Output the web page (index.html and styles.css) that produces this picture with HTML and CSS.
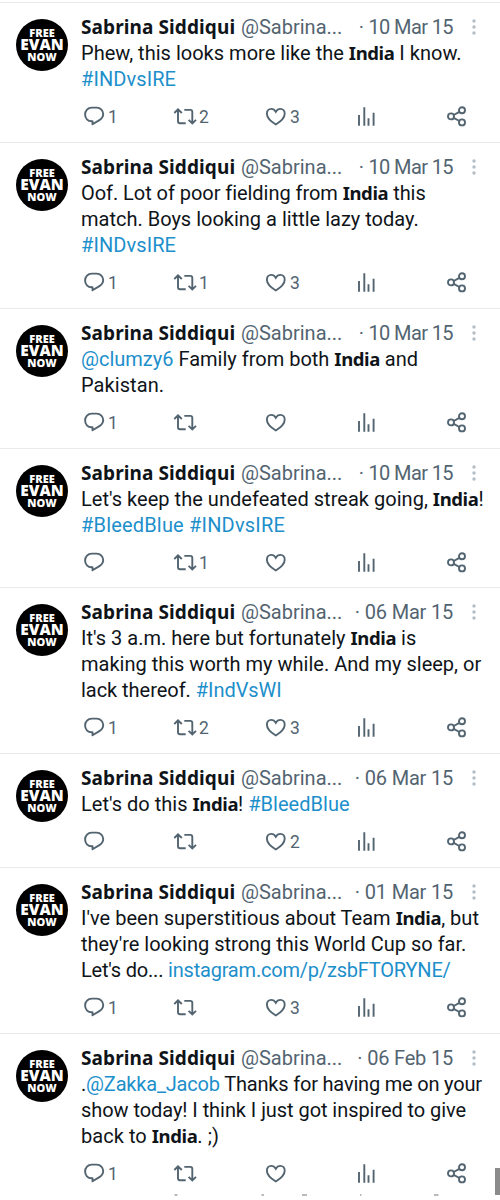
FILE: index.html
```html
<!DOCTYPE html>
<html lang="en">
<head>
<meta charset="utf-8">
<title>Posts</title>
<link rel="stylesheet" href="styles.css">
</head>
<body>
<main class="feed" id="feed"></main>
<svg class="peek" viewBox="0 0 500 2"><path d="M174.500 1H177.500M261.500 1H264M302 1H307M360 1H361.500M434 1H438.500"/></svg>
<div class="scrollbar"></div>
<script src="feed.js"></script>
</body>
</html>
```
FILE: styles.css
```css
* { box-sizing: border-box; }
body {
  margin: 0;
  height: 1200px;
  overflow: hidden;
  position: relative;
  background: #fff;
  color: #0f1419;
  font: 20px/26px Roboto, "Liberation Sans", sans-serif;
}
.feed { border-top: 1px solid #e8ebed; margin-top: 2px; }
.tweet {
  display: grid;
  grid-template-columns: 52px 1fr;
  column-gap: 13px;
  padding: 11px 0 12.86px 16px;
  border-bottom: 1px solid #e8ebed;
}
.tweet:last-child { border-bottom: 0; }
.avatar {
  width: 52px;
  height: 52px;
  margin-top: 5px;
  border-radius: 50%;
  background: #000;
  color: #fff;
  display: flex;
  flex-direction: column;
  align-items: center;
  padding-top: 8px;
  font-family: "Open Sans", "Noto Sans", sans-serif;
  font-weight: 800;
}
.avatar span { font-size: 11px; line-height: 11px; height: 11px; }
.avatar .mid { font-size: 15.5px; line-height: 13px; height: 13px; }
.head { display: flex; height: 26px; white-space: nowrap; }
.name { font: 700 19px/26px "Noto Sans", sans-serif; letter-spacing: 0.1px; width: 160px; }
.handle { width: 112px; color: #536471; }
.date { width: 100px; color: #536471; text-align: right; }
.dot { margin-right: 5px; }
.d10 { letter-spacing: -0.6px; }
.d06 { letter-spacing: -0.2px; }
.menu { width: 6px; height: 18px; margin: 4px 0 0 18px; fill: #b3bdc6; }
.line { height: 26px; white-space: nowrap; }
.line b { font: 700 18.5px/1 "Noto Sans", sans-serif; letter-spacing: -0.4px; }
.line a { color: #1d8fcb; text-decoration: none; }
.actions {
  display: grid;
  grid-template-columns: 91px 91px 91px 90px 40px;
  height: 24px;
  margin: 13px 0 0 1px;
  color: #536471;
}
.action { display: flex; gap: 2px; font-size: 17.5px; line-height: 25px; }
.action svg { width: 24px; height: 24px; fill: none; stroke: #536471; stroke-width: 1.9; }
.scrollbar { position: absolute; right: 0; top: 1168px; width: 5px; height: 27px; background: #8b8b8b; }
.peek { position: absolute; left: 0; top: 1194px; width: 500px; height: 2px; fill: none; stroke: #a0a5a9; stroke-width: 1.3; }
```
FILE: feed.js
```js
const icons = {
  reply: '<path d="M10.5 16.3H9.700C5.700 16.300 3.100 13.200 3.100 9.500S5.900 2.600 9.700 2.600H14.700C18.500 2.600 21.200 5.600 21.200 9.100C21.200 11.700 19.800 13.700 17.400 15.100L10.500 19.200Z" stroke-linejoin="round"/>',
  repost: '<path d="M1.300 8L5 4.400L8.800 8M5 4.800V16.300Q5 18.300 7 18.300H12.700M11.300 4.900H17.300Q19.300 4.900 19.300 6.900V18.200M15.600 14.900L19.300 18.500L23 14.900"/>',
  like: '<path d="M11.800 19.500C7 16.500 2.900 12.900 2.900 8.700C2.900 5.900 4.800 3.900 7.100 3.900C9.200 3.900 10.800 5 11.800 6.800C12.800 5 14.400 3.900 16.500 3.900C18.800 3.900 20.700 5.900 20.700 8.700C20.700 12.900 16.600 16.500 11.800 19.500Z"/>',
  views: '<path d="M4 10V20.700M9.300 2.300V20.700M13.500 13.300V20.700M18.600 7.700V20.700"/>',
  share: '<g><circle cx="6" cy="11.400" r="3"/><circle cx="17" cy="5.200" r="3"/><circle cx="17" cy="17.400" r="3"/><path d="M8.700 10L14.400 6.800M8.700 12.900L14.400 16"/></g>'
};

// Each line is [html, letter spacing in px].
const tweets = [
  { date: '10 Mar 15', counts: [1, 2, 3], lines: [["Phew, this looks more like the <b>India</b> I know.", 0.02], ["<a>#INDvsIRE</a>", 0.08]] },
  { date: '10 Mar 15', counts: [1, 1, 3], lines: [["Oof. Lot of poor fielding from <b>India</b> this", -0.05], ["match. Boys looking a little lazy today.", 0], ["<a>#INDvsIRE</a>", 0.08]] },
  { date: '10 Mar 15', counts: [1, '', ''], lines: [["<a>@clumzy6</a> Family from both <b>India</b> and", 0], ["Pakistan.", 0.08]] },
  { date: '10 Mar 15', counts: ['', 1, ''], lines: [["Let's keep the undefeated streak going, <b>India</b>!", 0.03], ["<a>#BleedBlue #INDvsIRE</a>", 0.18]] },
  { date: '06 Mar 15', counts: [1, 2, 3], lines: [["It's 3 a.m. here but fortunately <b>India</b> is", 0.01], ["making this worth my while. And my sleep, or", 0], ["lack thereof. <a>#IndVsWI</a>", -0.04]] },
  { date: '06 Mar 15', counts: ['', '', 2], lines: [["Let's do this <b>India</b>! <a>#BleedBlue</a>", 0.02]] },
  { date: '01 Mar 15', counts: [1, '', 3], lines: [["I've been superstitious about Team <b>India</b>, but", 0.02], ["they're looking strong this World Cup so far.", 0], ["Let's do... <a>instagram.com/p/zsbFTORYNE/</a>", -0.2]] },
  { date: '06 Feb 15', counts: [1, '', ''], lines: [[".<a>@Zakka_Jacob</a> Thanks for having me on your", -0.19], ["show today! I think I just got inspired to give", -0.06], ["back to <b>India</b>. ;)", 0.05]] }
];

const action = (name, count = '') =>
  `<div class="action"><svg viewBox="0 0 24 24">${icons[name]}</svg><span>${count}</span></div>`;

document.getElementById('feed').innerHTML = tweets.map(t => `
  <article class="tweet">
    <div class="avatar"><span>FREE</span><span class="mid">EVAN</span><span>NOW</span></div>
    <div>
      <div class="head">
        <span class="name">Sabrina Siddiqui</span><span class="handle">@Sabrina...</span>
        <span class="date ${t.date[0] === '1' ? 'd10' : 'd06'}"><span class="dot">·</span>${t.date}</span>
        <svg class="menu" viewBox="0 0 6 18"><circle cx="3" cy="3" r="1.700"/><circle cx="3" cy="9" r="1.700"/><circle cx="3" cy="15" r="1.700"/></svg>
      </div>
      ${t.lines.map(([html, s]) => `<div class="line" style="letter-spacing:${s}px">${html}</div>`).join('')}
      <div class="actions">${action('reply', t.counts[0])}${action('repost', t.counts[1])}${action('like', t.counts[2])}${action('views')}${action('share')}</div>
    </div>
  </article>`).join('');
```
